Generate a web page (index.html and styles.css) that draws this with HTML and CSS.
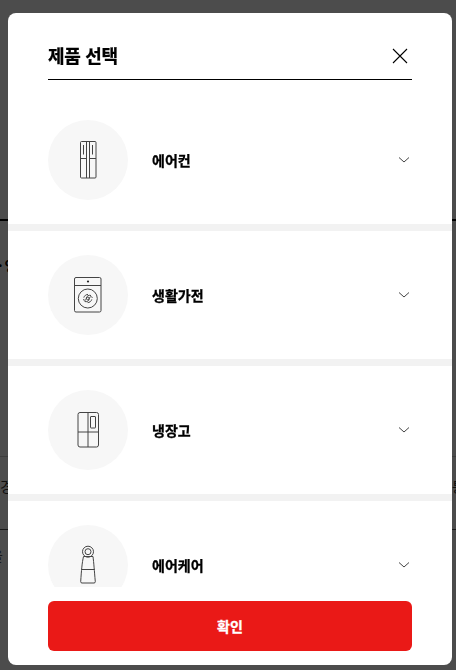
FILE: index.html
```html
<!DOCTYPE html>
<html lang="ko">
<head>
  <meta charset="UTF-8">
  <meta name="viewport" content="width=device-width, initial-scale=1.0">
  <title>제품 선택</title>
  <link rel="stylesheet" href="styles.css">
</head>
<body>
  <!-- 팝업 뒤의 페이지 -->
  <div class="page">
    <div class="page-top"></div>
    <div class="page-head">· 영</div>
    <div class="page-row"><span>경</span><span class="row-end">통</span></div>
    <div class="page-note">을</div>
  </div>

  <div class="dim">
    <div class="popup">
      <div class="popup-header">
        <h2>제품 선택</h2>
        <button class="close" aria-label="닫기">
          <svg width="24" height="24" viewBox="0 0 24 24"><path d="M5 5l14 14M19 5L5 19"/></svg>
        </button>
      </div>

      <ul class="category-list">
        <li>
          <span class="thumb">
            <svg width="40" height="40" viewBox="0 0 40 40">
              <rect x="12.500" y="1.500" width="15.500" height="36.500" rx="1"/>
              <path d="M18.500 1.500v36.500M21.500 1.500v36.500M12.500 18.500h6M21.500 18.500h6.500M15.500 5v9.500M24.500 5v9.500"/>
            </svg>
          </span>
          <strong>에어컨</strong>
          <svg class="arrow" width="16" height="16" viewBox="0 0 16 16"><path d="M3 5.500l5 4.500 5-4.500"/></svg>
        </li>
        <li>
          <span class="thumb">
            <svg width="40" height="40" viewBox="0 0 40 40">
              <rect x="6.500" y="2.500" width="26.500" height="34.500" rx="1.500"/>
              <path d="M6.500 10.500h26.500"/>
              <circle cx="19.800" cy="23.500" r="9.500"/>
              <circle class="dot" cx="20" cy="6.500" r="1.100"/>
              <path d="M15 24.500c1.600 1.400 3.400.6 3.400-1.200 0-1.600 2.800-1.600 2.800.4 0 2.200-2.400 3.600-4.600 2.800M24.600 22.500c-1.600-1.400-3.400-.6-3.400 1.200 0 1.600-2.800 1.600-2.800-.4 0-2.200 2.400-3.600 4.600-2.800M15.800 22.600c.6-2 2.400-3.200 4.200-3.200M23.800 24.400c-.6 2-2.400 3.200-4.200 3.200"/>
            </svg>
          </span>
          <strong>생활가전</strong>
          <svg class="arrow" width="16" height="16" viewBox="0 0 16 16"><path d="M3 5.500l5 4.500 5-4.500"/></svg>
        </li>
        <li>
          <span class="thumb">
            <svg width="40" height="40" viewBox="0 0 40 40">
              <rect x="10" y="2.500" width="20.500" height="34.500" rx="2"/>
              <path d="M20 2.500v34.500M10 22h20.500"/>
              <rect x="22.500" y="6.500" width="5" height="11.500" rx=".5"/>
            </svg>
          </span>
          <strong>냉장고</strong>
          <svg class="arrow" width="16" height="16" viewBox="0 0 16 16"><path d="M3 5.500l5 4.500 5-4.500"/></svg>
        </li>
        <li>
          <span class="thumb">
            <svg width="40" height="40" viewBox="0 0 40 40">
              <circle cx="20" cy="6.700" r="5.500"/>
              <circle cx="20" cy="6.700" r="3"/>
              <path d="M15.500 11.500h9.500c.8 6 1.300 14 2.300 25.200q0 1.300-1.300 1.300h-12q-1.300 0-1.300-1.300c.7-11.200 1.400-19.200 2.800-25.200zM13.700 24.500h13"/>
            </svg>
          </span>
          <strong>에어케어</strong>
          <svg class="arrow" width="16" height="16" viewBox="0 0 16 16"><path d="M3 5.500l5 4.500 5-4.500"/></svg>
        </li>
      </ul>

      <div class="popup-footer">
        <button class="confirm">확인</button>
      </div>
    </div>
  </div>
</body>
</html>
```

FILE: styles.css
```css
* {
  box-sizing: border-box;
}
html, body {
  margin: 0;
  padding: 0;
  height: 100%;
  overflow: hidden;
  background-color: #fff;
  font-family: "Noto Sans CJK KR", "Noto Sans", sans-serif;
  color: #000;
}
button {
  padding: 0;
  border: 0;
  font-family: inherit;
  cursor: pointer;
}

/* 뒤 페이지 */
.page {
  height: 670px;
  overflow: hidden;
}
.page-top {
  height: 221px;
  border-bottom: 2px solid #000;
}
.page-head {
  height: 236px;
  padding-top: 33px;
  border-bottom: 1px solid #ccc;
  font-size: 14px;
  font-weight: 700;
  line-height: 22px;
  text-indent: -2px;
  word-spacing: -2px;
}
.page-row {
  display: flex;
  justify-content: space-between;
  height: 73px;
  padding: 18px 0 0;
  border-bottom: 1px solid #555;
  font-size: 14px;
  line-height: 22px;
  color: #333;
}
.row-end {
  margin-right: -9px;
}
.page-note {
  padding-top: 14px;
  margin-left: -10px;
  font-size: 14px;
  line-height: 22px;
  color: #555;
}

/* 팝업 */
.dim {
  position: fixed;
  inset: 0;
  padding: 13px 4px 5px 8px;
  background-color: rgba(0, 0, 0, 0.7);
}
.popup {
  display: flex;
  flex-direction: column;
  height: 100%;
  overflow: hidden;
  background-color: #fff;
  border-radius: 8px;
}
.popup-header {
  display: flex;
  flex: none;
  align-items: center;
  justify-content: space-between;
  height: 67px;
  margin: 0 40px;
  padding-top: 20px;
  border-bottom: 1px solid #000;
}
.popup-header h2 {
  margin: 0;
  padding-bottom: 2px;
  font-size: 18px;
  font-weight: 700;
  line-height: 26px;
  letter-spacing: -0.3px;
  -webkit-text-stroke: 0.3px;
}
.close {
  width: 24px;
  height: 24px;
  background: none;
}
.close svg {
  display: block;
  fill: none;
  stroke: #000;
  stroke-width: 1.1;
}
.category-list {
  flex: 1;
  min-height: 0;
  margin: 0;
  padding: 16px 0 0;
  overflow: hidden;
  list-style: none;
}
.category-list li {
  display: flex;
  align-items: center;
  height: 135px;
  padding: 0 40px;
  border-bottom: 7px solid #f2f2f2;
}
.category-list strong {
  flex: 1;
  margin-left: 24px;
  font-size: 14px;
  font-weight: 700;
  line-height: 22px;
  -webkit-text-stroke: 0.3px;
}
.thumb {
  display: flex;
  align-items: center;
  justify-content: center;
  width: 80px;
  height: 80px;
  border-radius: 50%;
  background-color: #f7f7f7;
}
.thumb svg {
  fill: none;
  stroke: #444;
  stroke-width: 1;
}
.thumb .dot {
  fill: #222;
  stroke: none;
}
.arrow {
  fill: none;
  stroke: #444;
  stroke-width: 1;
}
.popup-footer {
  flex: none;
  padding: 14px 40px;
}
.confirm {
  display: block;
  width: 100%;
  height: 50px;
  border-radius: 6px;
  background-color: #ea1917;
  font-size: 14px;
  font-weight: 700;
  color: #fff;
  -webkit-text-stroke: 0.3px;
}
```
